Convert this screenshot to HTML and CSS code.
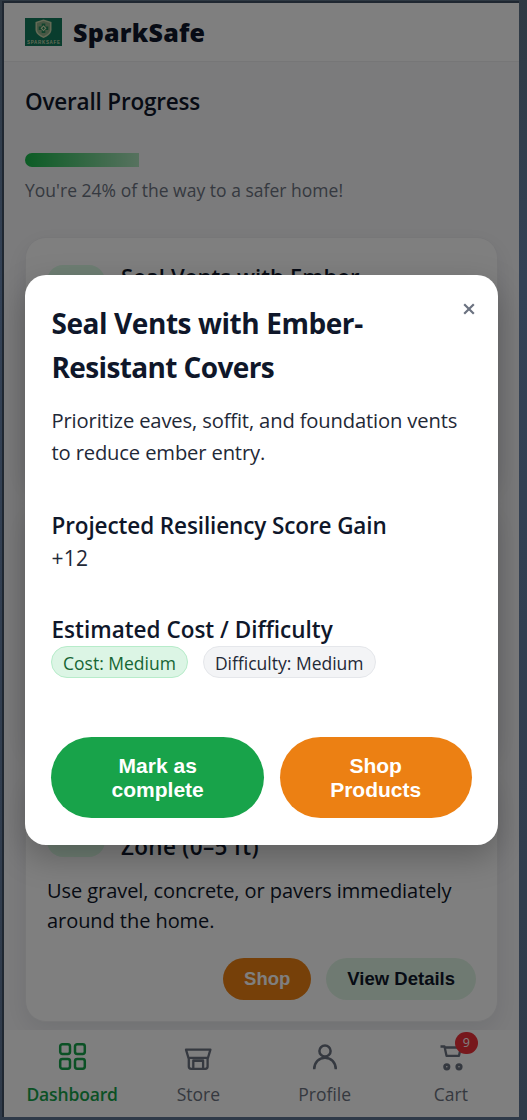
FILE: index.html
```html
<!DOCTYPE html>
<html lang="en">
<head>
<meta charset="utf-8">
<title>SparkSafe</title>
<link rel="stylesheet" href="styles.css">
</head>
<body>
<div class="phone">
  <header class="topbar">
    <svg class="logo" viewBox="0 0 37 28">
      <rect width="37" height="28" fill="#127a5c"/>
      <path d="M18.500 1.500 26.500 4v7.500c0 4-3.500 6.500-8 8.500-4.500-2-8-4.500-8-8.500V4z" fill="#c8d5ac"/>
      <path d="M18.500 3 25 5v6.300c0 3.200-2.800 5.500-6.500 7.200-3.700-1.700-6.500-4-6.500-7.200V5z" fill="#8fae88"/>
      <path d="M16.700 5.500h3.600v3h3v3.600h-3v3h-3.600v-3h-3V8.500h3z" fill="#24875b"/>
      <path d="M18.500 7.300 21.500 10.300 18.500 13.300 15.500 10.300z" fill="#d8e4b5"/>
      <path d="M18.500 9v2.600M17.200 10.300h2.600" stroke="#24875b" stroke-width="1"/>
      <text class="logo-text" x="18.500" y="26" text-anchor="middle" textLength="33">SPARKSAFE</text>
    </svg>
    <span class="brand">SparkSafe</span>
  </header>
  <main class="content">
    <h2 class="progress-title">Overall Progress</h2>
    <div class="track"><div class="fill" style="width:24%"></div></div>
    <p class="progress-note">You're 24% of the way to a safer home!</p>
    <section class="card">
      <div class="card-head"><span class="thumb"></span><h3 class="card-title">Seal Vents with Ember-</h3></div>
    </section>
    <section class="card"></section>
    <section class="card">
      <div class="card-head"><span class="thumb"></span><h3 class="card-title last-line">Zone (0–5 ft)</h3></div>
      <p class="card-text">Use gravel, concrete, or pavers immediately around the home.</p>
      <div class="card-actions"><button class="btn small orange">Shop</button><button class="btn small mint">View Details</button></div>
    </section>
  </main>
  <nav class="tabs">
    <a class="tab active">
      <svg class="icon" viewBox="0 0 32 32"><g fill="none" stroke="currentColor" stroke-width="2.500"><rect x="4.200" y="4.200" width="9.800" height="9.800" rx="2.200"/><rect x="19" y="4.200" width="9.800" height="9.800" rx="2.200"/><rect x="4.200" y="19" width="9.800" height="9.800" rx="2.200"/><rect x="19" y="19" width="9.800" height="9.800" rx="2.200"/></g></svg>
      <span class="label">Dashboard</span>
    </a>
    <a class="tab">
      <svg class="icon" viewBox="0 0 32 32"><g fill="none" stroke="currentColor" stroke-width="2.300" stroke-linejoin="round"><path d="M4 9.600h24.400l-2.400 8.200H6.400z"/><path d="M6.800 18v8.500q0 2.300 2.300 2.300h14.200q2.300 0 2.300-2.300V18M11.300 28.500v-8h9.800v8M11.300 20.800h9.800"/></g></svg>
      <span class="label">Store</span>
    </a>
    <a class="tab">
      <svg class="icon" viewBox="0 0 32 32"><g fill="none" stroke="currentColor" stroke-width="2.500"><circle cx="16" cy="11" r="5.600"/><path d="M5.200 29.300c0-7 4.800-11.600 10.800-11.600s10.800 4.600 10.800 11.600"/></g></svg>
      <span class="label">Profile</span>
    </a>
    <a class="tab">
      <span class="cart"><svg class="icon" viewBox="0 0 32 32"><g fill="none" stroke="currentColor" stroke-width="2.300" stroke-linejoin="round"><path d="M5.500 6.500h4l2 9.300h12.500l1.800-8.300H9.800"/><circle cx="11.800" cy="26.800" r="2.200" stroke-width="2.800"/><circle cx="24" cy="26.800" r="2.200" stroke-width="2.800"/></g></svg><span class="badge">9</span></span>
      <span class="label">Cart</span>
    </a>
  </nav>
  <div class="overlay">
    <div class="modal">
      <button class="close" aria-label="Close"><svg viewBox="0 0 12 12"><path d="M1.200 1.200l9.600 9.600M10.800 1.200l-9.600 9.600" fill="none" stroke="currentColor" stroke-width="2.200"/></svg></button>
      <h1 class="modal-title">Seal Vents with Ember-<br><span class="tight">Resistant Covers</span></h1>
      <p class="modal-text">Prioritize eaves, soffit, and foundation vents<br>to reduce ember entry.</p>
      <h2 class="sub">Projected Resiliency Score Gain</h2>
      <p class="gain">+12</p>
      <h2 class="sub loose">Estimated Cost / Difficulty</h2>
      <div class="chips"><span class="chip cost">Cost: Medium</span><span class="chip difficulty">Difficulty: Medium</span></div>
      <div class="actions"><button class="btn large green">Mark as<br>complete</button><button class="btn large orange">Shop<br>Products</button></div>
    </div>
  </div>
</div>
</body>
</html>
```
FILE: styles.css
```css
* { box-sizing: border-box; }
body {
  margin: 0;
  height: 1120px;
  padding: 3px 8px 3px 4px;
  overflow: hidden;
  background: linear-gradient(#2f3943, #334155 25%, #2f3a49);
  font-family: "Open Sans", "Noto Sans", sans-serif;
  color: #0f172a;
}
h1, h2, h3, p { margin: 0; }
button { border: 0; font-family: "Liberation Sans", Arial, sans-serif; font-weight: 700; }
.phone {
  position: relative;
  display: flex;
  flex-direction: column;
  height: 1114px;
  background: #f7f7f9;
  overflow: hidden;
  box-shadow: -1px -1px 0 1px #1f2731;
}
.topbar {
  display: flex;
  align-items: center;
  gap: 11px;
  flex: 0 0 59px;
  padding: 0 21px;
  background: #fff;
  border-bottom: 1px solid #ececef;
}
.logo { width: 37px; height: 28px; }
.logo-text { font: 700 4.500px "Liberation Sans", sans-serif; fill: #c8d5ac; }
.brand { font-size: 25px; font-weight: 800; letter-spacing: 0.250px; }
.content { flex: 1; min-height: 0; overflow: hidden; padding: 24px 21px 0; }
.progress-title { font-size: 22.500px; line-height: 32px; font-weight: 600; letter-spacing: -0.200px; }
.track { height: 14px; margin-top: 35px; border-radius: 7px; overflow: hidden; }
.fill { height: 100%; background: linear-gradient(90deg, #18b94a, #aee4be); }
.progress-note { margin-top: 8px; font-size: 17.500px; line-height: 30px; letter-spacing: 0.020px; color: #6b7280; }
.card {
  min-height: 250px;
  margin-bottom: 17px;
  padding: 21px;
  border: 1px solid #eeeef1;
  border-radius: 21px;
  background: #fff;
  box-shadow: 0 8px 24px rgba(15, 23, 42, .09);
}
.progress-note + .card { margin-top: 32px; }
.card-head { display: flex; align-items: center; gap: 16px; height: 70px; }
.thumb { flex: 0 0 58px; height: 58px; border-radius: 16px; background: #dcfce7; }
.card-title { height: 70px; font-size: 22px; line-height: 35px; font-weight: 600; letter-spacing: 0.100px; }
.last-line { padding-top: 36px; font-size: 22.500px; letter-spacing: 0.300px; }
.card-text { margin-top: 13px; font-size: 20px; line-height: 30px; letter-spacing: -0.060px; }
.card-actions { display: flex; justify-content: flex-end; gap: 15px; margin-top: 22px; }
.btn { border-radius: 999px; color: #fff; text-align: center; padding: 0 21px; }
.small { height: 42px; font-size: 18.500px; }
.orange { background: #ec8013; }
.green { background: #18a34a; }
.mint { background: #dff5e4; color: #0f172a; }
.tabs { display: flex; flex: 0 0 87px; padding: 10px 5px 0; background: #fff; }
.tab { display: flex; flex: 1; flex-direction: column; align-items: center; gap: 5px; color: #6b7280; }
.active { color: #16a34a; font-weight: 600; }
.active .label { letter-spacing: -0.150px; }
.icon { display: block; width: 32px; height: 32px; }
.label { font-size: 17.500px; line-height: 34px; }
.cart { position: relative; }
.badge {
  position: absolute;
  left: 20px;
  top: -8px;
  width: 23px;
  height: 22px;
  border-radius: 11px;
  background: #ef3038;
  color: #fff;
  font-size: 12.500px;
  line-height: 22px;
  text-align: center;
}
.overlay {
  position: absolute;
  inset: 0;
  display: flex;
  align-items: center;
  padding: 0 21px;
  background: rgba(0, 0, 0, .5);
}
.modal {
  position: relative;
  width: 473px;
  height: 570px;
  padding: 26px 26px 26px 26.500px;
  border-radius: 21px;
  background: #fff;
  box-shadow: 0 12px 32px rgba(0, 0, 0, .25);
}
.close { position: absolute; right: 23px; top: 28px; width: 12px; height: 12px; padding: 0; background: none; color: #6b7280; }
.close svg { display: block; width: 12px; height: 12px; }
.modal-title { font-size: 28px; line-height: 44px; font-weight: 700; letter-spacing: -0.430px; }
.tight { letter-spacing: -0.630px; }
.modal-text { margin-top: 15px; font-size: 20.200px; line-height: 32px; letter-spacing: -0.150px; color: #1f2937; }
.sub { margin-top: 42px; font-size: 22.500px; line-height: 32px; font-weight: 600; letter-spacing: -0.110px; }
.gain { font-size: 21px; line-height: 32px; letter-spacing: 0.200px; color: #1f2937; }
.gain + .sub { margin-top: 40px; }
.loose { letter-spacing: 0; }
.chips { display: flex; gap: 15px; margin: 0 0 0 -0.500px; }
.chip { height: 32px; padding: 0 11px; border: 1px solid #e5e7eb; border-radius: 16px; font-size: 17.500px; line-height: 32px; white-space: nowrap; }
.cost { border-color: #b7ecca; background: #dcf5e5; color: #166534; }
.difficulty { background: #f3f4f6; color: #1f2937; }
.actions { display: grid; grid-template-columns: 213px 192px; gap: 15.500px; margin: 59.400px 0 0 -0.300px; }
.large { height: 81px; font-size: 21px; line-height: 24px; }
```
